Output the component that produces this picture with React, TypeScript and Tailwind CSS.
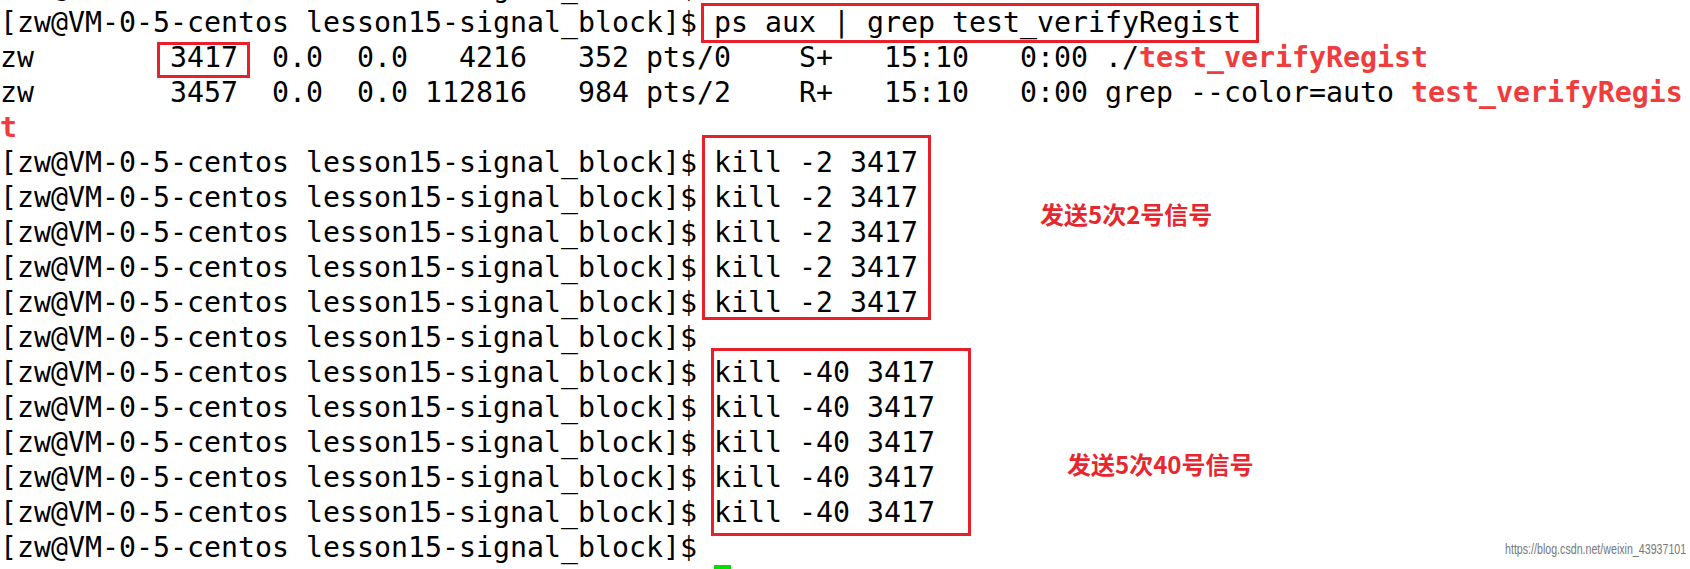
import React from "react";

const P = "[zw@VM-0-5-centos lesson15-signal_block]$ ";

function Line({ children }: { children?: React.ReactNode }) {
  return <div className="h-[35px] whitespace-pre">{children}</div>;
}

function Red({ children }: { children: React.ReactNode }) {
  return <span className="font-bold text-[#f03c3c]">{children}</span>;
}

export default function App() {
  return (
    <div className="relative w-[1690px] h-[569px] overflow-hidden bg-white">
      <div className="-mt-[30px] flex flex-col font-['DejaVu_Sans_Mono',monospace] text-[28.24px] leading-[35px] text-black">
        <Line>{P}</Line>
        <Line>{P + "ps aux | grep test_verifyRegist"}</Line>
        <Line>
          {"zw        3417  0.0  0.0   4216   352 pts/0    S+   15:10   0:00 ./"}
          <Red>test_verifyRegist</Red>
        </Line>
        <Line>
          {"zw        3457  0.0  0.0 112816   984 pts/2    R+   15:10   0:00 grep --color=auto "}
          <Red>test_verifyRegis</Red>
        </Line>
        <Line>
          <Red>t</Red>
        </Line>
        <Line>{P + "kill -2 3417"}</Line>
        <Line>{P + "kill -2 3417"}</Line>
        <Line>{P + "kill -2 3417"}</Line>
        <Line>{P + "kill -2 3417"}</Line>
        <Line>{P + "kill -2 3417"}</Line>
        <Line>{P}</Line>
        <Line>{P + "kill -40 3417"}</Line>
        <Line>{P + "kill -40 3417"}</Line>
        <Line>{P + "kill -40 3417"}</Line>
        <Line>{P + "kill -40 3417"}</Line>
        <Line>{P + "kill -40 3417"}</Line>
        <Line>{P}</Line>
        <Line>
          {" ".repeat(42)}
          <span className="inline-block w-[17px] h-[35px] align-top bg-[#00e000]" />
        </Line>
      </div>

      {/* annotation boxes drawn over the terminal */}
      <div className="absolute left-[701px] top-[3px] w-[558px] h-[40px] border-[3px] border-[#e8202a]" />
      <div className="absolute left-[157px] top-[42px] w-[93px] h-[36px] border-[3px] border-[#e8202a]" />
      <div className="absolute left-[702px] top-[135px] w-[229px] h-[185px] border-[3px] border-[#e8202a]" />
      <div className="absolute left-[711px] top-[348px] w-[260px] h-[188px] border-[3px] border-[#e8202a]" />

      <div className="absolute left-[1040px] top-[200px] font-['Noto_Sans_CJK_SC',sans-serif] font-bold text-[24px] leading-[28px] text-[#e8262e] whitespace-pre">
        发送5次2号信号
      </div>
      <div className="absolute left-[1067px] top-[450px] font-['Noto_Sans_CJK_SC',sans-serif] font-bold text-[24px] leading-[28px] text-[#e8262e] whitespace-pre">
        发送5次40号信号
      </div>

      <div className="absolute left-[1505px] top-[540px] origin-left scale-x-[0.71] font-['Liberation_Sans',sans-serif] text-[15px] leading-[18px] text-[#777777] whitespace-pre">
        https://blog.csdn.net/weixin_43937101
      </div>
    </div>
  );
}
